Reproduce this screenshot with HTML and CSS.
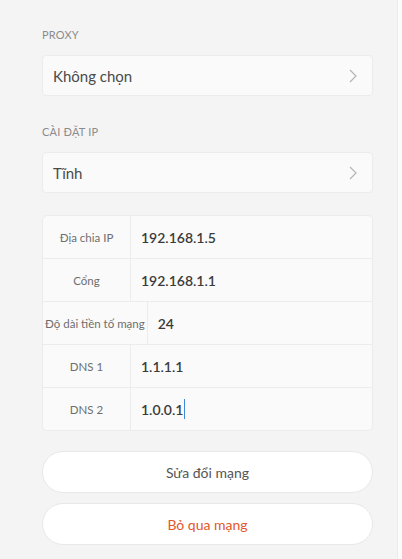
FILE: index.html
```html
<!DOCTYPE html>
<html lang="vi">
<head>
    <meta charset="UTF-8">
    <title>Cài đặt mạng</title>
    <link rel="stylesheet" href="styles.css">
</head>
<body>
    <div class="page">
        <div class="section-title">PROXY</div>
        <div class="select-row">
            <span>Không chọn</span>
            <svg class="chevron" width="8" height="14" viewBox="0 0 8 14"><path d="M1 1 L7 7 L1 13" fill="none" stroke="#b4b4b4" stroke-width="1.2"/></svg>
        </div>

        <div class="section-title">CÀI ĐẶT IP</div>
        <div class="select-row">
            <span>Tĩnh</span>
            <svg class="chevron" width="8" height="14" viewBox="0 0 8 14"><path d="M1 1 L7 7 L1 13" fill="none" stroke="#b4b4b4" stroke-width="1.2"/></svg>
        </div>

        <div class="ip-table">
            <div class="ip-row">
                <div class="ip-label">Địa chia IP</div>
                <div class="ip-value">192.168.1.5</div>
            </div>
            <div class="ip-row">
                <div class="ip-label">Cổng</div>
                <div class="ip-value">192.168.1.1</div>
            </div>
            <div class="ip-row">
                <div class="ip-label">Độ dài tiền tố mạng</div>
                <div class="ip-value">24</div>
            </div>
            <div class="ip-row">
                <div class="ip-label">DNS 1</div>
                <div class="ip-value">1.1.1.1</div>
            </div>
            <div class="ip-row">
                <div class="ip-label">DNS 2</div>
                <div class="ip-value">1.0.0.1<span class="caret"></span></div>
            </div>
        </div>

        <button class="btn">Sửa đổi mạng</button>
        <button class="btn btn-danger">Bỏ qua mạng</button>
    </div>
    <div class="edge"></div>
</body>
</html>
```

FILE: styles.css
```css
body {
    margin: 0;
    display: flex;
    height: 559px;
    background: #fbfbfb;
    font-family: Lato, "Noto Sans", sans-serif;
    color: #444;
}

.page {
    width: 397px;
    background: #f4f4f4;
    padding: 28px 24px 0 42px;
    box-sizing: border-box;
}

.edge {
    flex: 1;
    border-left: 1px solid #ececec;
}

.section-title {
    font-size: 11px;
    color: #8c8c8c;
    letter-spacing: 0.2px;
    height: 14px;
    line-height: 14px;
    margin-bottom: 13px;
}

.select-row {
    display: flex;
    align-items: center;
    justify-content: space-between;
    height: 41px;
    padding: 0 15px 0 10px;
    background: #fafafa;
    border: 1px solid #ececec;
    border-radius: 4px;
    box-sizing: border-box;
    font-size: 15px;
    color: #4a4a4a;
    margin-bottom: 29px;
}

.ip-table {
    margin-top: -7px;
    background: #fafafa;
    border: 1px solid #ececec;
    border-radius: 5px;
    overflow: hidden;
}

.ip-row {
    display: flex;
    height: 43px;
    box-sizing: border-box;
    border-top: 1px solid #ececec;
}

.ip-row:first-child {
    border-top: none;
    height: 42px;
}

.ip-label {
    flex: none;
    min-width: 88px;
    padding: 0 2px;
    box-sizing: border-box;
    display: flex;
    align-items: center;
    justify-content: center;
    font-size: 11.5px;
    color: #6e6e6e;
    white-space: nowrap;
    border-right: 1px solid #ececec;
}

.ip-value {
    display: flex;
    align-items: center;
    padding-left: 10px;
    font-size: 14px;
    font-weight: 600;
    color: #3a3a3a;
}

.caret {
    display: inline-block;
    width: 1px;
    height: 20px;
    background: #3d8ad8;
    margin-left: 1px;
}

.btn {
    display: block;
    width: 331px;
    height: 42px;
    margin-top: 20px;
    background: #ffffff;
    border: 1px solid #e8e8e8;
    border-radius: 21px;
    font-family: Lato, "Noto Sans", sans-serif;
    font-size: 14px;
    color: #555;
}

.btn-danger {
    margin-top: 10px;
    color: #e2572b;
}
```
